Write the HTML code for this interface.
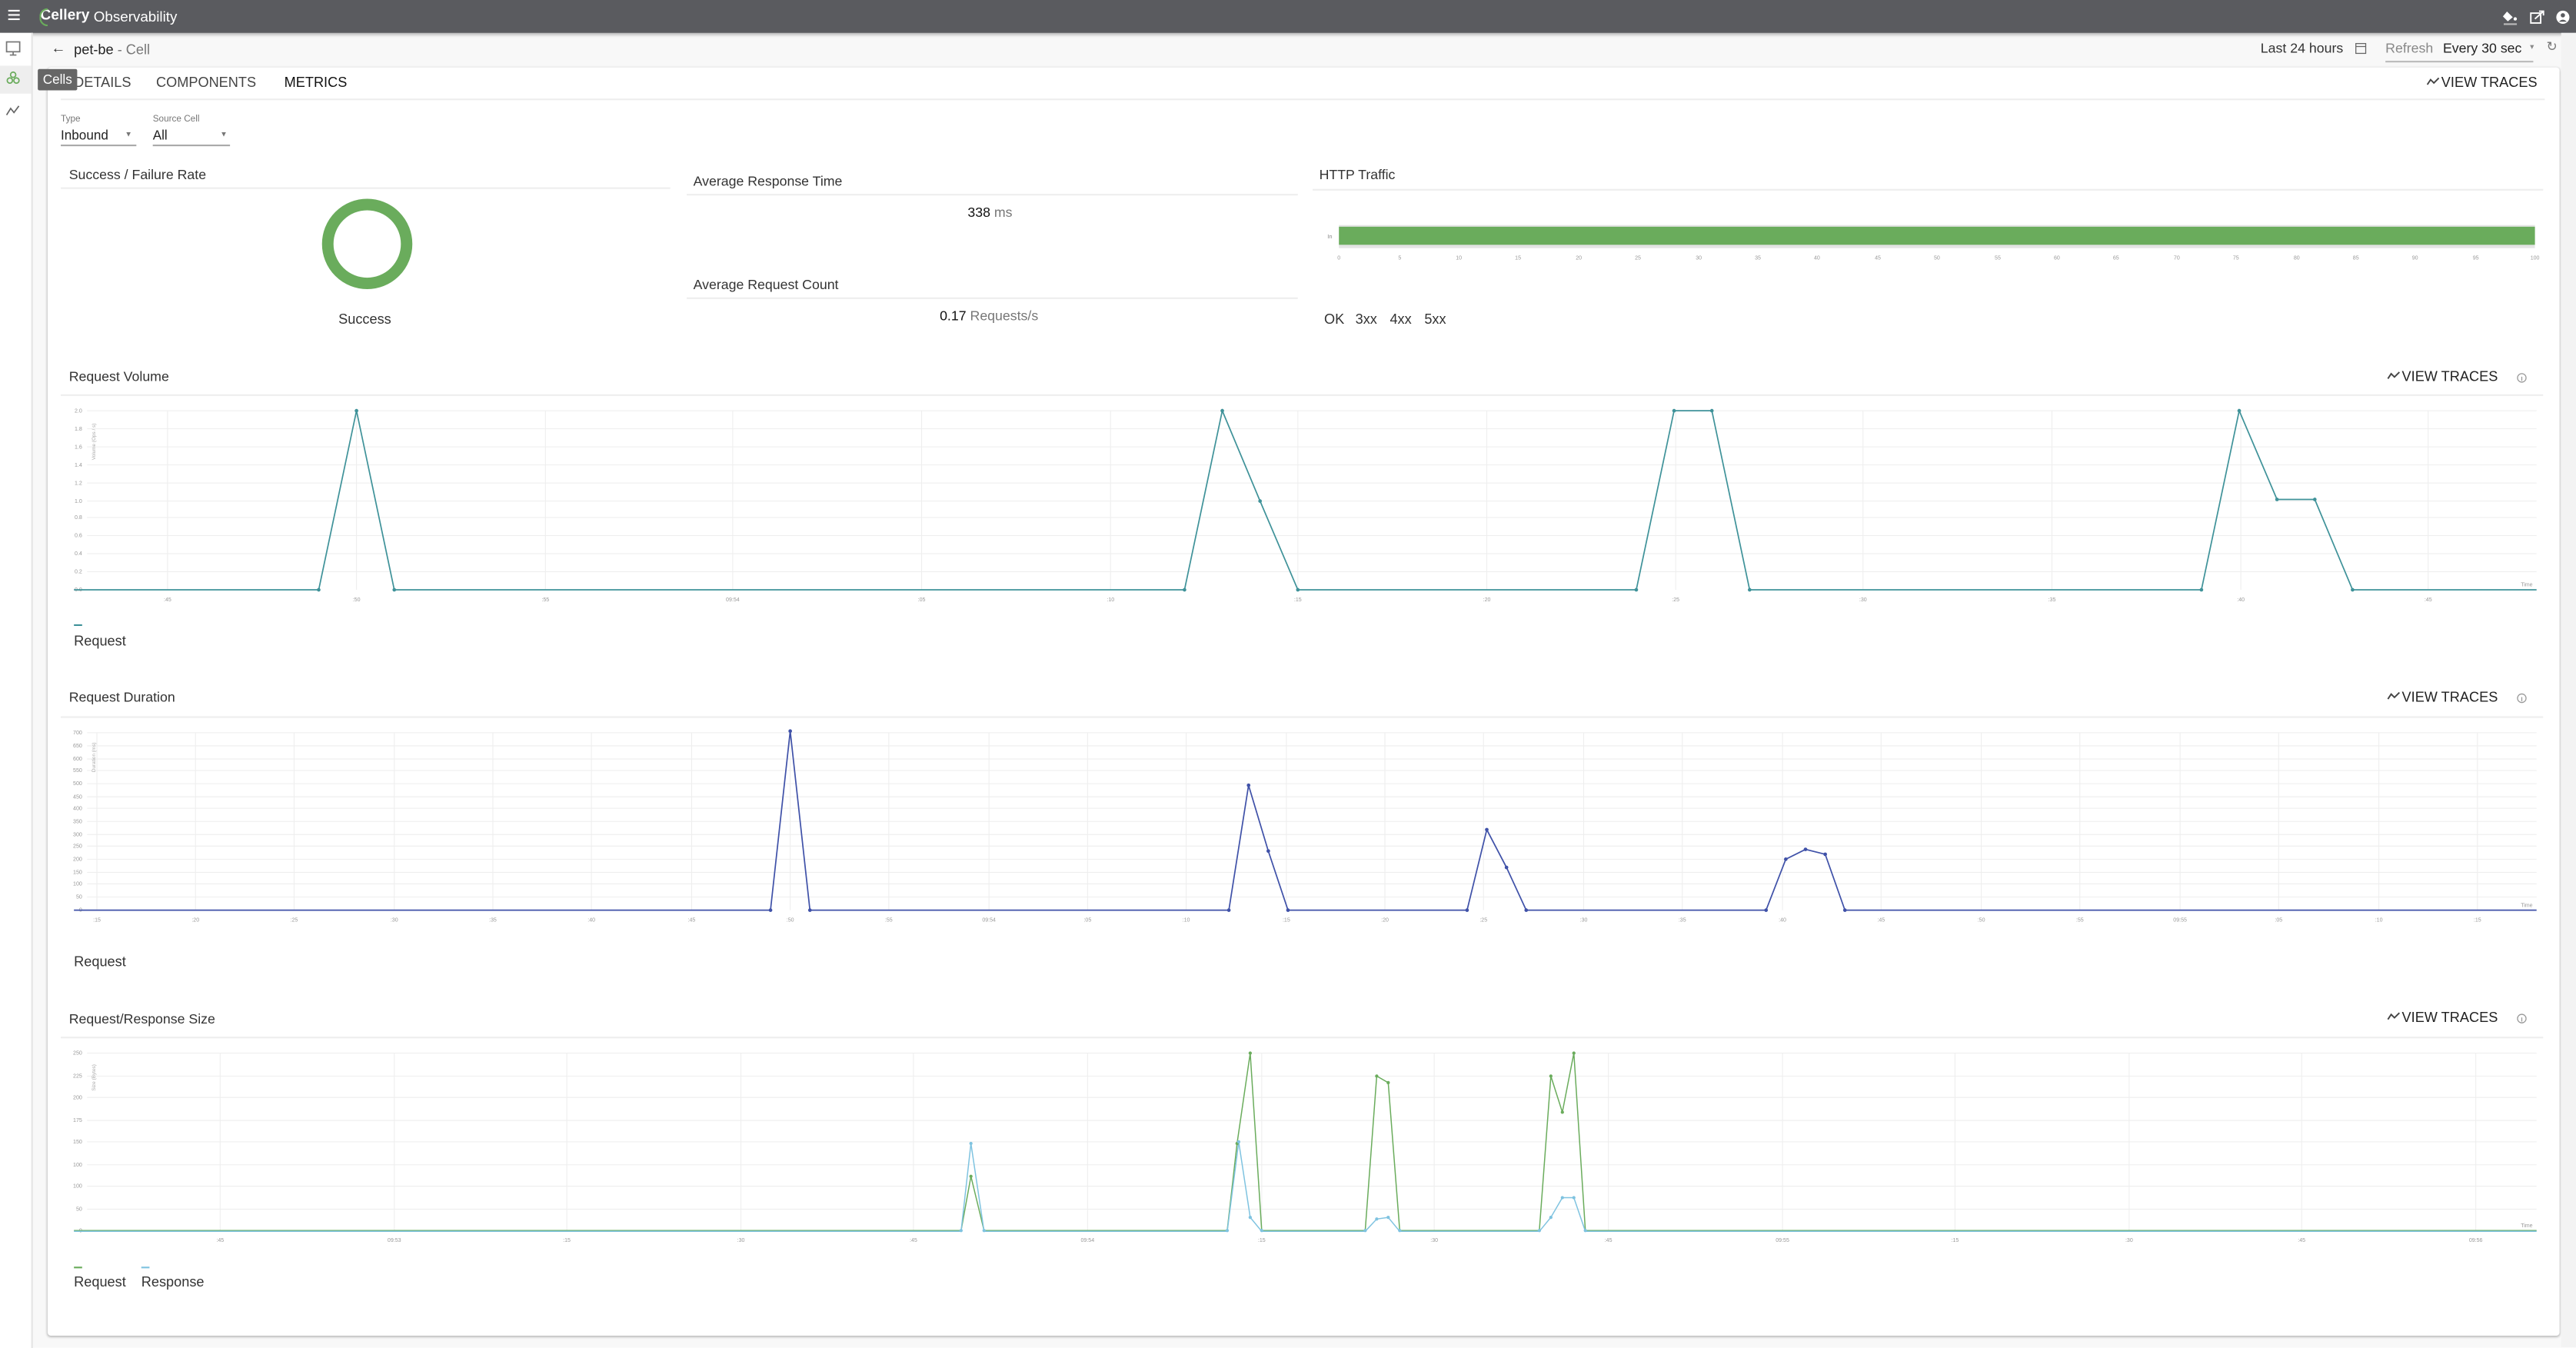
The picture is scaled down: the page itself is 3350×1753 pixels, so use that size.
<!DOCTYPE html>
<html><head><meta charset="utf-8">
<style>
html,body{margin:0;padding:0;width:3350px;height:1752px;overflow:hidden;background:#fafafa;font-family:"Liberation Sans",sans-serif;}
#w{position:absolute;left:0;top:0;width:1568px;height:820px;transform:scale(2.13648);transform-origin:0 0;background:#f8f8f8;}
.a{position:absolute;white-space:nowrap;}
.t{font-size:8.3px;color:#333;}
.ic{display:inline-block;width:8px;height:5px;margin-right:1px;vertical-align:1px}
</style></head><body><div id="w">
<!-- top bar -->
<div class="a" style="left:0;top:0;width:1568px;height:19.5px;background:#5a5b5f;box-shadow:0 1px 2px rgba(0,0,0,.3)"></div>
<div class="a" style="left:5px;top:6px;width:7px;height:1.2px;background:#fff;box-shadow:0 2.6px 0 #fff,0 5.2px 0 #fff"></div>
<div class="a" style="left:24.5px;top:4px;font-size:9px;color:#fff;font-weight:bold">Cellery</div>
<div class="a" style="left:23.5px;top:4.5px;width:4px;height:9px;border:1.2px solid #6aac5c;border-right:none;border-radius:5px 0 0 5px;"></div>
<div class="a" style="left:57px;top:4.5px;font-size:8.8px;color:#fff">Observability</div>
<svg class="a" style="left:1523px;top:4px" width="42" height="12" viewBox="0 0 42 12">
<path d="M3 3 L6.5 6.5 L3.5 9 L0.5 6 Z" fill="#fff"/><circle cx="8" cy="7.5" r="1" fill="#fff"/><rect x="1" y="10.2" width="8" height="1" fill="#bbb"/>
<rect x="17.5" y="4" width="6" height="6" fill="none" stroke="#fff" stroke-width="0.9"/><path d="M20 7.5 L25 3 M22.5 2.8 L25.2 2.8 L25.2 5.4" stroke="#fff" stroke-width="0.9" fill="none"/>
<circle cx="37" cy="6.5" r="4" fill="#fff"/><circle cx="37" cy="5.3" r="1.3" fill="#5a5b5f"/><path d="M34.6 9.2 Q37 6.8 39.4 9.2" fill="#5a5b5f"/>
</svg>
<!-- sidebar -->
<div class="a" style="left:0;top:19.5px;width:18.5px;height:801px;background:#fff;border-right:0.6px solid #e4e4e4"></div>
<div class="a" style="left:0;top:40px;width:18.5px;height:17px;background:#eee"></div>
<svg class="a" style="left:2px;top:24px" width="14" height="50" viewBox="0 0 14 50">
<rect x="2" y="1.5" width="8" height="6" fill="none" stroke="#777" stroke-width="0.8"/><path d="M6 7.5 V9.5 M4 9.5 H8" stroke="#777" stroke-width="0.8"/>
<g fill="none" stroke="#6aac5c" stroke-width="0.8"><circle cx="6" cy="21.5" r="1.6"/><circle cx="4" cy="25" r="1.6"/><circle cx="8" cy="25" r="1.6"/></g>
<path d="M2 46 L4.5 42 L6.5 44.5 L9.5 40.5" fill="none" stroke="#666" stroke-width="0.8"/>
</svg>
<!-- main card -->
<div class="a" style="left:29px;top:41px;width:1529px;height:772px;background:#fff;box-shadow:0 0.5px 1.5px rgba(0,0,0,.3);border-radius:2px"></div>
<div class="a" style="left:1559px;top:20px;width:9px;height:800px;background:#f3f3f3"></div>
<!-- header -->
<div class="a" style="left:31px;top:24px;font-size:9px;color:#333">&#8592;</div>
<div class="a" style="left:45px;top:25px;font-size:8.5px;color:#222">pet-be <span style="color:#777">- Cell</span></div>
<div class="a t" style="left:1376px;top:24px;color:#333">Last 24 hours</div>
<svg class="a" style="left:1433px;top:24.5px" width="8" height="9" viewBox="0 0 8 9"><rect x="1" y="1.5" width="6" height="6" fill="none" stroke="#666" stroke-width="0.6"/><path d="M1 3.3 H7" stroke="#666" stroke-width="0.6"/></svg>
<div class="a t" style="left:1452px;top:24px;color:#888">Refresh</div>
<div class="a t" style="left:1487px;top:24px;color:#222">Every 30 sec</div>
<div class="a" style="left:1540px;top:26px;font-size:5px;color:#888">&#9662;</div>
<div class="a" style="left:1452px;top:36.5px;width:90px;height:0.6px;background:#bbb"></div>
<div class="a" style="left:1550px;top:24px;font-size:8px;color:#777">&#8635;</div>
<!-- tabs -->
<div class="a t" style="left:45px;top:45px;font-size:8.5px;color:#444">DETAILS</div>
<div class="a t" style="left:95px;top:45px;font-size:8.5px;color:#444">COMPONENTS</div>
<div class="a t" style="left:173px;top:45px;font-size:8.5px;color:#111">METRICS</div>
<div class="a" style="left:23px;top:41.5px;width:24px;height:13px;background:#666;border-radius:1px;color:#fff;font-size:8px;line-height:13px;text-align:center">Cells</div>
<div class="a" style="left:37px;top:60px;width:1512px;height:1px;background:#eee"></div>
<div class="a t" style="left:1477px;top:45px;font-size:8.5px;color:#222"><svg class="ic" viewBox="0 0 8 5"><path d="M0.5 4.5 L2.5 1.5 L4.5 3.5 L7.5 0.5" fill="none" stroke="#444" stroke-width="0.9"/></svg>VIEW TRACES</div>
<!-- filters -->
<div class="a" style="left:37px;top:70px;font-size:5.5px;color:#777">Type</div>
<div class="a" style="left:37px;top:77.5px;font-size:8px;color:#222">Inbound</div>
<div class="a" style="left:76px;top:79px;font-size:4.5px;color:#777">&#9660;</div>
<div class="a" style="left:37px;top:88px;width:46px;height:0.6px;background:#aaa"></div>
<div class="a" style="left:93px;top:70px;font-size:5.5px;color:#777">Source Cell</div>
<div class="a" style="left:93px;top:77.5px;font-size:8px;color:#222">All</div>
<div class="a" style="left:134px;top:79px;font-size:4.5px;color:#777">&#9660;</div>
<div class="a" style="left:93px;top:88px;width:47px;height:0.6px;background:#aaa"></div>
<!-- success card -->
<div class="a t" style="left:42px;top:101px">Success / Failure Rate</div>
<div class="a" style="left:37px;top:114px;width:371px;height:1px;background:#eee"></div>
<div class="a" style="left:195.5px;top:121px;border:7px solid #6aac5c;border-radius:50%;box-sizing:border-box;width:55px;height:55px"></div>
<div class="a t" style="left:206px;top:189px;font-size:8.5px;color:#333">Success</div>
<!-- avg -->
<div class="a t" style="left:422px;top:105px">Average Response Time</div>
<div class="a" style="left:418px;top:118px;width:372px;height:1px;background:#eee"></div>
<div class="a t" style="left:589px;top:123.5px;color:#111">338 <span style="color:#777">ms</span></div>
<div class="a t" style="left:422px;top:168px">Average Request Count</div>
<div class="a" style="left:418px;top:181px;width:372px;height:1px;background:#eee"></div>
<div class="a t" style="left:572px;top:186.5px;color:#111">0.17 <span style="color:#777">Requests/s</span></div>
<!-- http traffic -->
<div class="a t" style="left:803px;top:101px">HTTP Traffic</div>
<div class="a" style="left:799px;top:115px;width:749px;height:1px;background:#eee"></div>
<div class="a" style="left:815px;top:136.5px;width:728px;height:14px;background:#e4e4e4"></div>
<div class="a" style="left:815px;top:137.5px;width:728px;height:11.5px;background:#6aac5c"></div>
<div class="a" style="left:808px;top:141.5px;font-size:3.5px;color:#888">In</div>
<div class="a t" style="left:806px;top:189px;font-size:8.5px">OK</div>
<div class="a t" style="left:825px;top:189px;font-size:8.5px">3xx</div>
<div class="a t" style="left:846px;top:189px;font-size:8.5px">4xx</div>
<div class="a t" style="left:867px;top:189px;font-size:8.5px">5xx</div>
<svg class="a" style="left:0;top:0" width="1568" height="820" viewBox="0 0 1568 820" font-family="Liberation Sans, sans-serif">
<g font-size="3.3" fill="#999" text-anchor="middle">
<text x="815" y="158">0</text><text x="852" y="158">5</text><text x="888" y="158">10</text><text x="924" y="158">15</text><text x="961" y="158">20</text><text x="997" y="158">25</text><text x="1034" y="158">30</text><text x="1070" y="158">35</text><text x="1106" y="158">40</text><text x="1143" y="158">45</text><text x="1179" y="158">50</text><text x="1216" y="158">55</text><text x="1252" y="158">60</text><text x="1288" y="158">65</text><text x="1325" y="158">70</text><text x="1361" y="158">75</text><text x="1398" y="158">80</text><text x="1434" y="158">85</text><text x="1470" y="158">90</text><text x="1507" y="158">95</text><text x="1543" y="158">100</text>
</g>
<g stroke="#eee" stroke-width="0.5">
<path d="M53 250H1544M53 261H1544M53 272H1544M53 283H1544M53 294H1544M53 305H1544M53 315H1544M53 326H1544M53 337H1544M53 348H1544"/>
<path d="M102 250V359M217 250V359M332 250V359M446 250V359M561 250V359M676 250V359M790 250V359M905 250V359M1020 250V359M1134 250V359M1249 250V359M1364 250V359M1478 250V359"/>
<path d="M53 446H1544M53 454H1544M53 462H1544M53 469H1544M53 477H1544M53 485H1544M53 492H1544M53 500H1544M53 508H1544M53 515H1544M53 523H1544M53 531H1544M53 538H1544M53 546H1544"/>
<path d="M59 446V554M119 446V554M179 446V554M240 446V554M300 446V554M360 446V554M421 446V554M481 446V554M541 446V554M602 446V554M662 446V554M722 446V554M783 446V554M843 446V554M903 446V554M964 446V554M1024 446V554M1085 446V554M1145 446V554M1206 446V554M1266 446V554M1327 446V554M1387 446V554M1448 446V554M1508 446V554"/>
<path d="M53 641H1544M53 655H1544M53 668H1544M53 682H1544M53 695H1544M53 709H1544M53 722H1544M53 736H1544"/>
<path d="M134 641V749M240 641V749M345 641V749M451 641V749M556 641V749M662 641V749M768 641V749M873 641V749M979 641V749M1085 641V749M1190 641V749M1296 641V749M1401 641V749M1507 641V749"/>
</g>
<g font-size="3.3" fill="#999" text-anchor="end">
<text x="50" y="251">2.0</text><text x="50" y="262">1.8</text><text x="50" y="273">1.6</text><text x="50" y="284">1.4</text><text x="50" y="295">1.2</text><text x="50" y="306">1.0</text><text x="50" y="316">0.8</text><text x="50" y="327">0.6</text><text x="50" y="338">0.4</text><text x="50" y="349">0.2</text><text x="50" y="360">0.0</text>
<text x="50" y="447">700</text><text x="50" y="455">650</text><text x="50" y="463">600</text><text x="50" y="470">550</text><text x="50" y="478">500</text><text x="50" y="486">450</text><text x="50" y="493">400</text><text x="50" y="501">350</text><text x="50" y="509">300</text><text x="50" y="516">250</text><text x="50" y="524">200</text><text x="50" y="532">150</text><text x="50" y="539">100</text><text x="50" y="547">50</text><text x="50" y="555">0</text>
<text x="50" y="642">250</text><text x="50" y="656">225</text><text x="50" y="669">200</text><text x="50" y="683">175</text><text x="50" y="696">150</text><text x="50" y="710">100</text><text x="50" y="723">100</text><text x="50" y="737">50</text><text x="50" y="750">0</text>
</g>
<g font-size="3.3" fill="#999" text-anchor="middle">
<text x="102" y="366">:45</text><text x="217" y="366">:50</text><text x="332" y="366">:55</text><text x="446" y="366">09:54</text><text x="561" y="366">:05</text><text x="676" y="366">:10</text><text x="790" y="366">:15</text><text x="905" y="366">:20</text><text x="1020" y="366">:25</text><text x="1134" y="366">:30</text><text x="1249" y="366">:35</text><text x="1364" y="366">:40</text><text x="1478" y="366">:45</text>
<text x="59" y="561">:15</text><text x="119" y="561">:20</text><text x="179" y="561">:25</text><text x="240" y="561">:30</text><text x="300" y="561">:35</text><text x="360" y="561">:40</text><text x="421" y="561">:45</text><text x="481" y="561">:50</text><text x="541" y="561">:55</text><text x="602" y="561">09:54</text><text x="662" y="561">:05</text><text x="722" y="561">:10</text><text x="783" y="561">:15</text><text x="843" y="561">:20</text><text x="903" y="561">:25</text><text x="964" y="561">:30</text><text x="1024" y="561">:35</text><text x="1085" y="561">:40</text><text x="1145" y="561">:45</text><text x="1206" y="561">:50</text><text x="1266" y="561">:55</text><text x="1327" y="561">09:55</text><text x="1387" y="561">:05</text><text x="1448" y="561">:10</text><text x="1508" y="561">:15</text>
<text x="134" y="756">:45</text><text x="240" y="756">09:53</text><text x="345" y="756">:15</text><text x="451" y="756">:30</text><text x="556" y="756">:45</text><text x="662" y="756">09:54</text><text x="768" y="756">:15</text><text x="873" y="756">:30</text><text x="979" y="756">:45</text><text x="1085" y="756">09:55</text><text x="1190" y="756">:15</text><text x="1296" y="756">:30</text><text x="1401" y="756">:45</text><text x="1507" y="756">09:56</text>
<text x="1538" y="357">Time</text><text x="1538" y="552">Time</text><text x="1538" y="747">Time</text>
</g>
<g font-size="3" fill="#aaa"><text transform="translate(58,280) rotate(-90)">Volume (Ops / s)</text><text transform="translate(58,470) rotate(-90)">Duration (ms)</text><text transform="translate(58,664) rotate(-90)">Size (Bytes)</text></g>
<polyline fill="none" stroke="#3f9299" stroke-width="0.8" points="45,359 194,359 217,250 240,359 721,359 744,250 767,305 790,359 996,359 1019,250 1042,250 1065,359 1340,359 1363,250 1386,304 1409,304 1432,359 1544,359"/>
<g fill="#3f9299"><circle cx="194" cy="359" r="1.1"/><circle cx="217" cy="250" r="1.1"/><circle cx="240" cy="359" r="1.1"/><circle cx="721" cy="359" r="1.1"/><circle cx="744" cy="250" r="1.1"/><circle cx="767" cy="305" r="1.1"/><circle cx="790" cy="359" r="1.1"/><circle cx="996" cy="359" r="1.1"/><circle cx="1019" cy="250" r="1.1"/><circle cx="1042" cy="250" r="1.1"/><circle cx="1065" cy="359" r="1.1"/><circle cx="1340" cy="359" r="1.1"/><circle cx="1363" cy="250" r="1.1"/><circle cx="1386" cy="304" r="1.1"/><circle cx="1409" cy="304" r="1.1"/><circle cx="1432" cy="359" r="1.1"/></g>
<polyline fill="none" stroke="#3f51a8" stroke-width="0.8" points="45,554 469,554 481,445 493,554 748,554 760,478 772,518 784,554 893,554 905,505 917,528 929,554 1075,554 1087,523 1099,517 1111,520 1123,554 1544,554"/>
<g fill="#3f51a8"><circle cx="469" cy="554" r="1.1"/><circle cx="481" cy="445" r="1.1"/><circle cx="493" cy="554" r="1.1"/><circle cx="748" cy="554" r="1.1"/><circle cx="760" cy="478" r="1.1"/><circle cx="772" cy="518" r="1.1"/><circle cx="784" cy="554" r="1.1"/><circle cx="893" cy="554" r="1.1"/><circle cx="905" cy="505" r="1.1"/><circle cx="917" cy="528" r="1.1"/><circle cx="929" cy="554" r="1.1"/><circle cx="1075" cy="554" r="1.1"/><circle cx="1087" cy="523" r="1.1"/><circle cx="1099" cy="517" r="1.1"/><circle cx="1111" cy="520" r="1.1"/><circle cx="1123" cy="554" r="1.1"/></g>
<polyline fill="none" stroke="#6aac5c" stroke-width="0.7" points="45,749 585,749 591,716 599,749 747,749 753,696 761,641 768,749 831,749 838,655 845,659 852,749 937,749 944,655 951,677 958,641 965,749 1544,749"/>
<polyline fill="none" stroke="#7fc3e0" stroke-width="0.7" points="45,749.5 585,749.5 591,696 599,749.5 747,749.5 754,695 761,741 768,749.5 831,749.5 838,742 845,741 852,749.5 937,749.5 944,741 951,729 958,729 965,749.5 1544,749.5"/>
<g fill="#6aac5c"><circle cx="591" cy="716" r="1"/><circle cx="753" cy="696" r="1"/><circle cx="761" cy="641" r="1"/><circle cx="838" cy="655" r="1"/><circle cx="845" cy="659" r="1"/><circle cx="944" cy="655" r="1"/><circle cx="951" cy="677" r="1"/><circle cx="958" cy="641" r="1"/></g>
<g fill="#7fc3e0"><circle cx="591" cy="696" r="1"/><circle cx="754" cy="695" r="1"/><circle cx="761" cy="741" r="1"/><circle cx="838" cy="742" r="1"/><circle cx="845" cy="741" r="1"/><circle cx="944" cy="741" r="1"/><circle cx="951" cy="729" r="1"/><circle cx="958" cy="729" r="1"/><circle cx="585" cy="749" r="1"/><circle cx="599" cy="749" r="1"/><circle cx="747" cy="749" r="1"/><circle cx="768" cy="749" r="1"/><circle cx="831" cy="749" r="1"/><circle cx="852" cy="749" r="1"/><circle cx="937" cy="749" r="1"/><circle cx="965" cy="749" r="1"/></g>
<g fill="none" stroke="#999" stroke-width="0.6"><circle cx="1535" cy="230" r="2.6"/><circle cx="1535" cy="425" r="2.6"/><circle cx="1535" cy="620" r="2.6"/></g>
<g stroke="#999" stroke-width="0.6"><path d="M1535 229.3V231.8M1535 424.3V426.8M1535 619.3V621.8"/></g>
<rect x="45" y="380" width="5" height="1" fill="#3f9299"/>
<rect x="45" y="771" width="5" height="1" fill="#6aac5c"/><rect x="86" y="771" width="5" height="1" fill="#7fc3e0"/>
</svg>
<div class="a t" style="left:42px;top:224px">Request Volume</div>
<div class="a" style="left:37px;top:240px;width:1511px;height:1px;background:#eee"></div>
<div class="a t" style="left:1453px;top:224px;font-size:8.5px;color:#222"><svg class="ic" viewBox="0 0 8 5"><path d="M0.5 4.5 L2.5 1.5 L4.5 3.5 L7.5 0.5" fill="none" stroke="#444" stroke-width="0.9"/></svg>VIEW TRACES</div>
<div class="a t" style="left:45px;top:385px;font-size:8.5px">Request</div>
<div class="a t" style="left:42px;top:419px">Request Duration</div>
<div class="a" style="left:37px;top:436px;width:1511px;height:1px;background:#eee"></div>
<div class="a t" style="left:1453px;top:419px;font-size:8.5px;color:#222"><svg class="ic" viewBox="0 0 8 5"><path d="M0.5 4.5 L2.5 1.5 L4.5 3.5 L7.5 0.5" fill="none" stroke="#444" stroke-width="0.9"/></svg>VIEW TRACES</div>
<div class="a t" style="left:45px;top:579.5px;font-size:8.5px">Request</div>
<div class="a t" style="left:42px;top:614.5px">Request/Response Size</div>
<div class="a" style="left:37px;top:631px;width:1511px;height:1px;background:#eee"></div>
<div class="a t" style="left:1453px;top:614px;font-size:8.5px;color:#222"><svg class="ic" viewBox="0 0 8 5"><path d="M0.5 4.5 L2.5 1.5 L4.5 3.5 L7.5 0.5" fill="none" stroke="#444" stroke-width="0.9"/></svg>VIEW TRACES</div>
<div class="a t" style="left:45px;top:775px;font-size:8.5px">Request</div>
<div class="a t" style="left:86px;top:775px;font-size:8.5px">Response</div>
</div></body></html>
